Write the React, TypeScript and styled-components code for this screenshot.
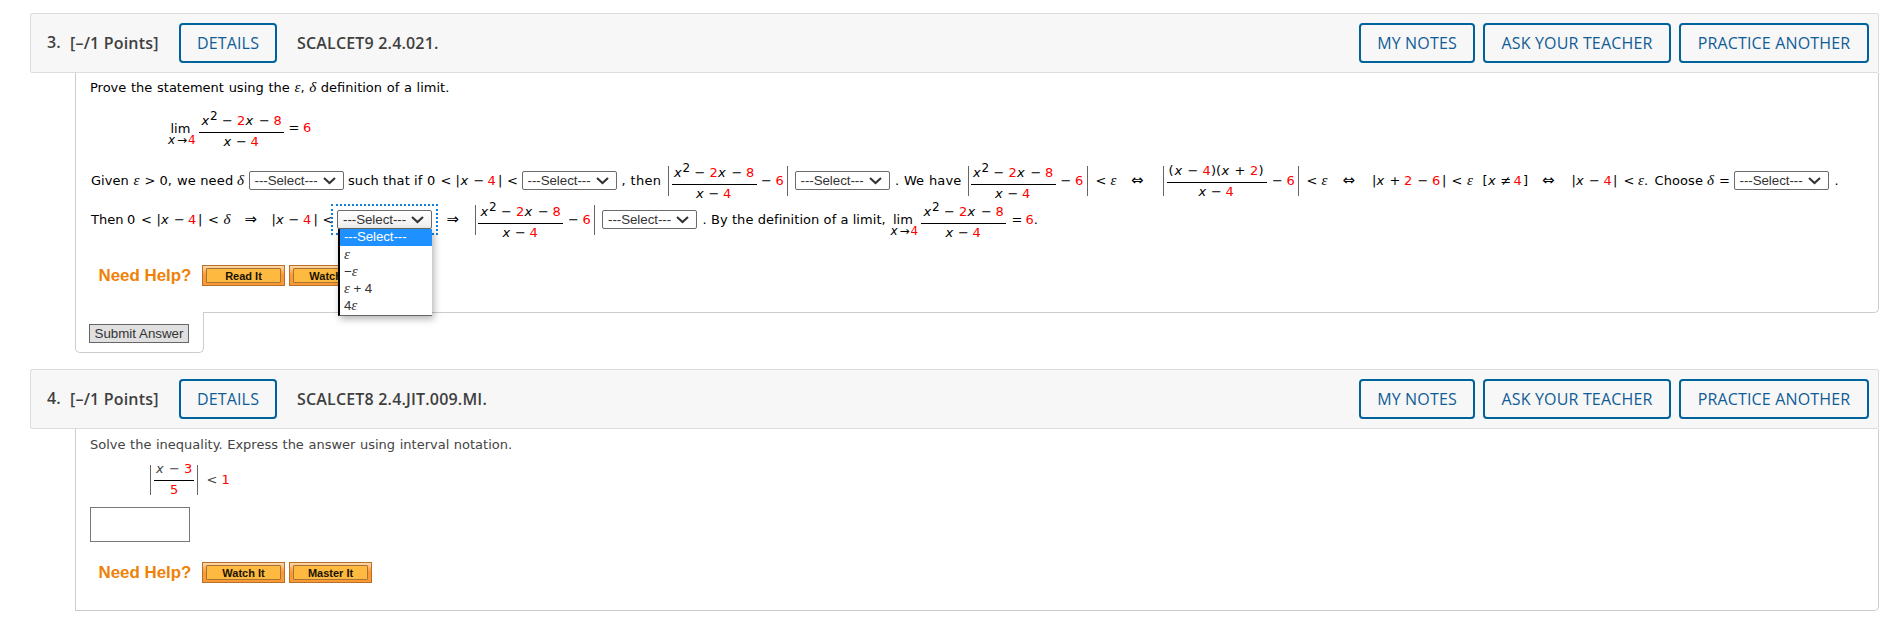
import React from 'react';
import styled, { createGlobalStyle, css } from 'styled-components';

const Global = createGlobalStyle`
  * { box-sizing: border-box; }
  body { margin: 0; background: #fff; font-family: 'DejaVu Sans', sans-serif; font-size: 13px; color: #000; }
`;

const Page = styled.main`
  width: 1891px;
  height: 643px;
  padding: 13px 12px 0 30px;
  overflow: hidden;
`;
const Question = styled.section`
  margin-bottom: 16px;
`;
const Header = styled.header`
  height: 60px;
  display: flex;
  align-items: center;
  padding: 0 9px 0 16px;
  background: #f7f7f7;
  border: 1px solid #ddd;
  border-radius: 2px;
  font: 600 16px/24px 'Open Sans', sans-serif;
  letter-spacing: 0.18px;
  color: #3f3f3f;
  white-space: nowrap;
`;
const Num = styled.span`
  width: 23px;
  padding-bottom: 2px;
`;
const Points = styled.span`
  width: 109px;
`;
const Code = styled.span`
  margin-left: 20px;
  flex: 1;
`;
const Actions = styled.div`
  display: flex;
  gap: 8px;
`;
const HeadButton = styled.button<{ $w: number }>`
  width: ${(p) => p.$w}px;
  height: 40px;
  padding: 0;
  border: 2px solid #00629b;
  border-radius: 4px;
  background: #f7f7f7;
  color: #0f5c96;
  font: 400 16px/24px 'Open Sans', sans-serif;
  letter-spacing: 0.16px;
  white-space: nowrap;
`;
const Body = styled.div<{ $h: number; $soft?: boolean }>`
  height: ${(p) => p.$h}px;
  margin-left: 45px;
  padding: ${(p) => (p.$soft ? 6 : 5)}px 0 0 14px;
  border: 1px solid #ccc;
  border-top: 0;
  border-radius: 0 0 5px 0;
  color: ${(p) => (p.$soft ? '#444' : '#000')};
`;
const Prompt = styled.p<{ $ws: number }>`
  margin: 0;
  line-height: 20px;
  word-spacing: ${(p) => p.$ws}px;
  white-space: nowrap;
`;
const Row = styled.div<{ $top?: number }>`
  display: flex;
  align-items: flex-start;
  height: 39px;
  margin-top: ${(p) => p.$top ?? 0}px;
  padding-left: 1px;
  line-height: 39px;
  white-space: pre;
`;
const Slot = styled.span<{ $w?: number; $ls?: number }>`
  display: block;
  flex: none;
  width: ${(p) => (p.$w === undefined ? 'auto' : `${p.$w}px`)};
  letter-spacing: ${(p) => p.$ls ?? 0}px;
`;
const Var = styled.i`
  font-style: italic;
`;
const Greek = styled.i`
  font: italic 15px 'Liberation Serif', serif;
`;
const Red = styled.span`
  color: #f00;
`;
const Arrow = styled.span`
  font-size: 15px;
`;
const Bar = styled.span`
  display: block;
  width: 1px;
  height: 30px;
  margin: 5px 0 0 -1px;
  background: #666;
`;
const Fraction = styled.span<{ $w: number; $top?: number }>`
  display: flex;
  flex-direction: column;
  width: ${(p) => p.$w}px;
  margin: ${(p) => p.$top ?? 4}px 0 0 -1px;
  line-height: 16px;
`;
const Upper = styled.span`
  display: flex;
  height: 20px;
  padding-left: 1px;
  border-bottom: 1px solid #000;
`;
const Lower = styled.span<{ $pad: number }>`
  display: flex;
  height: 17px;
  padding: 1px 0 0 ${(p) => p.$pad}px;
`;
const Power = styled.span`
  display: block;
  margin-top: -5px;
  font-size: 12px;
`;
const LimBox = styled.span<{ $top: number }>`
  display: block;
  padding-top: ${(p) => p.$top}px;
  line-height: 16px;
`;
const LimWord = styled.span`
  display: block;
  height: 11px;
  padding-left: 2.5px;
`;
const LimSub = styled.span`
  display: flex;
  font-size: 12px;
`;
const box = css`
  display: flex;
  align-items: center;
  width: 95px;
  height: 19px;
  border: 1px solid #6b6b6b;
  border-radius: 2px;
  background: #fff;
`;
const SelectBox = styled.span`
  ${box}
  justify-content: space-between;
  margin: 10px 0 0 -1px;
  padding: 0 7px 0 5px;
  font: 13.33px/17px 'Liberation Sans', sans-serif;
  letter-spacing: -0.05px;
  color: #333;
`;
const Focus = styled.span`
  display: block;
  position: relative;
  width: 107px;
  height: 31px;
  margin: 4px 0 0 -7px;
  padding: 4px;
  border: 2px dotted #1381dc;
  & > ${SelectBox} { margin: 0; background: linear-gradient(#fff, #eee); }
`;
const Menu = styled.span`
  position: absolute;
  z-index: 2;
  left: 5px;
  top: 23px;
  width: 94px;
  height: 87px;
  border-left: 2px solid #000;
  border-bottom: 1px solid #666;
  background: #fff;
  box-shadow: 2px 3px 7px rgba(0, 0, 0, 0.3);
`;
const Option = styled.span<{ $on?: boolean }>`
  display: block;
  height: 17px;
  padding-left: 4px;
  font: 13.33px/15px 'Liberation Sans', sans-serif;
  letter-spacing: -0.1px;
  color: ${(p) => (p.$on ? '#fff' : '#333')};
  background: ${(p) => (p.$on ? '#1e90ff' : 'transparent')};
`;
const Help = styled.div<{ $top: number }>`
  display: flex;
  align-items: center;
  height: 21px;
  margin-top: ${(p) => p.$top}px;
  padding-left: 8.5px;
`;
const HelpLabel = styled.span`
  width: 103.5px;
  font: 700 16.9px/20px 'Liberation Sans', sans-serif;
  color: #ee8208;
`;
const HelpButton = styled.button`
  width: 83px;
  height: 21px;
  margin-right: 4px;
  padding: 2px 3px;
  border: 1px solid #b5702a;
  background: linear-gradient(#ffd9ad, #fb9a35 45%, #fb9a35);
`;
const HelpFace = styled.span`
  display: block;
  height: 15px;
  border: 1px solid #a87436;
  border-radius: 1px;
  background: #fdb940;
  color: #1b1200;
  font: 700 11px/14px 'Liberation Sans', sans-serif;
`;
const Tab = styled.div`
  position: relative;
  width: 129px;
  height: 41px;
  margin: -1px 0 0 45px;
  padding: 12px 0 0 13px;
  border: 1px solid #ccc;
  border-top: 0;
  border-radius: 0 0 5px 5px;
  background: #fff;
`;
const Submit = styled.button`
  display: block;
  width: 100px;
  height: 19px;
  padding: 0;
  border: 1px solid #666;
  background: #e0e0e0;
  color: #333;
  font: 13.33px/17px 'Liberation Sans', sans-serif;
`;
const Answer = styled.input`
  display: block;
  width: 100px;
  height: 35px;
  margin-top: 8px;
  border: 1px solid #777;
  background: #fff;
`;

const Select = () => (
  <SelectBox>
    ---Select---
    <svg width="13" height="8" viewBox="0 0 13 8" fill="none" stroke="#333" strokeWidth="2.1">
      <path d="M1 1l5.5 5L12 1" />
    </svg>
  </SelectBox>
);

type Part = [number, React.ReactNode, number?];

/* Lays parts out left to right; each number is the distance of the part from the line's start. */
const Parts = ({ items }: { items: Part[] }) => (
  <>
    {items.map(([x, node, ls], i) => (
      <Slot key={i} $w={i + 1 < items.length ? items[i + 1][0] - x : undefined} $ls={ls}>
        {node}
      </Slot>
    ))}
  </>
);

const x = <Var>x</Var>;
const eps = <Greek>ε</Greek>;
const del = <Greek>δ</Greek>;
const iff = <Arrow>⇔</Arrow>;
const implies = <Arrow>⇒</Arrow>;
const r = (t: string) => <Red>{t}</Red>;

const Quadratic = ({ top }: { top?: number }) => (
  <Fraction $w={85} $top={top}>
    <Upper>
      <Parts items={[[0, ''], [1.5, x], [10, <Power>2</Power>], [22, '−'], [37, r('2')], [45.5, x], [59, '−'], [73.5, r('8')]]} />
    </Upper>
    <Lower $pad={24.5}>
      <Parts items={[[0, x], [12.5, '−'], [27, r('4')]]} />
    </Lower>
  </Fraction>
);

const Product = () => (
  <Fraction $w={100} $top={2}>
    <Upper>
      <Parts items={[[0, ''], [1, '('], [7, x], [20, '−'], [35, r('4')], [43.5, ')('], [54, x], [67, '+'], [82.5, r('2')], [91, ')']]} />
    </Upper>
    <Lower $pad={32}>
      <Parts items={[[0, x], [12.5, '−'], [27, r('4')]]} />
    </Lower>
  </Fraction>
);

const Limit = ({ top = 12 }: { top?: number }) => (
  <LimBox $top={top}>
    <LimWord>lim</LimWord>
    <LimSub>
      <Parts items={[[0, x], [9, '→'], [20, r('4')]]} />
    </LimSub>
  </LimBox>
);

const rowOne: Part[] = [
  [-0.5, 'Given'], [42, eps], [53, '>'], [68, '0,'], [85.5, 'we need', 0.15], [145.5, del],
  [158, <Select />], [256.5, 'such that if', 0.1], [335.5, '0'], [349, '<'], [364, '|'],
  [369, x], [382, '−'], [396, r('4')], [406.5, '|'], [415.5, '<'], [431, <Select />],
  [530, ','], [539, 'then', 0.3], [577, <Bar />], [581, <Quadratic />], [669.5, '−'],
  [684, r('6')], [696, <Bar />], [704, <Select />], [803.5, '.'], [812.5, 'We'],
  [837.5, 'have', 0.1], [877, <Bar />], [880, <Quadratic />], [969, '−'], [983.5, r('6')],
  [996, <Bar />], [1004, '<'], [1019, eps], [1039.5, iff], [1072, <Bar />],
  [1076, <Product />], [1180.5, '−'], [1195, r('6')], [1207, <Bar />], [1215, '<'],
  [1230, eps], [1251, iff], [1280.5, '|'], [1285, x], [1298, '+'], [1312.5, r('2')],
  [1326, '−'], [1340.5, r('6')], [1350.5, '|'], [1360, '<'], [1375.5, eps], [1391, '['],
  [1396.5, x], [1409, '≠'], [1422, r('4')], [1431.5, ']'], [1450.5, iff], [1480, '|'],
  [1484.5, x], [1497.5, '−'], [1512, r('4')], [1521.5, '|'], [1532, '<'], [1546.5, <>{eps}.</>],
  [1563, 'Choose', 0.1], [1615.5, del], [1627.5, '='], [1643, <Select />], [1743, '.'],
];

const rowTwo: Part[] = [
  [0, 'Then'], [36, '0'], [50, '<'], [65.5, '|'], [70, x], [83, '−'], [97, r('4')],
  [107, '|'], [117, '<'], [132.5, del], [153.5, implies], [180.5, '|'], [185, x],
  [197.5, '−'], [212, r('4')], [222.5, '|'], [231.5, '<'],
  [247, (
    <Focus>
      <Select />
      <Menu>
        <Option $on>---Select---</Option>
        <Option>{eps}</Option>
        <Option>−{eps}</Option>
        <Option>{eps} + 4</Option>
        <Option>4{eps}</Option>
      </Menu>
    </Focus>
  )],
  [355.5, implies], [385, <Bar />], [388, <Quadratic />], [477, '−'], [491.5, r('6')],
  [504, <Bar />], [512, <Select />], [611.5, '.'], [620, 'By the definition of a limit,', 0.06],
  [799.5, <Limit />], [831, <Quadratic />], [920.5, '='], [934.5, <>{r('6')}.</>],
];

const Head = ({ n, code }: { n: string; code: string }) => (
  <Header>
    <Num>{n}</Num>
    <Points>[–/1 Points]</Points>
    <HeadButton $w={98}>DETAILS</HeadButton>
    <Code>{code}</Code>
    <Actions>
      <HeadButton $w={116}>MY NOTES</HeadButton>
      <HeadButton $w={188}>ASK YOUR TEACHER</HeadButton>
      <HeadButton $w={190}>PRACTICE ANOTHER</HeadButton>
    </Actions>
  </Header>
);

const NeedHelp = ({ top, labels }: { top: number; labels: string[] }) => (
  <Help $top={top}>
    <HelpLabel>Need Help?</HelpLabel>
    {labels.map((l) => (
      <HelpButton key={l}><HelpFace>{l}</HelpFace></HelpButton>
    ))}
  </Help>
);

export default function App() {
  return (
    <Page>
      <Global />
      <Question>
        <Head n="3." code="SCALCET9 2.4.021." />
        <Body $h={240}>
          <Prompt $ws={0.55}>Prove the statement using the {eps}, {del} definition of a limit.</Prompt>
          <Row $top={10}>
            <Parts items={[[0, ''], [77, <Limit top={13} />], [109, <Quadratic top={5} />], [197.5, '='], [212, r('6')]]} />
          </Row>
          <Row $top={14}><Parts items={rowOne} /></Row>
          <Row><Parts items={rowTwo} /></Row>
          <NeedHelp top={26} labels={['Read It', 'Watch It']} />
        </Body>
        <Tab><Submit>Submit Answer</Submit></Tab>
      </Question>
      <Question>
        <Head n="4." code="SCALCET8 2.4.JIT.009.MI." />
        <Body $h={182} $soft>
          <Prompt $ws={0.45}>Solve the inequality. Express the answer using interval notation.</Prompt>
          <Row $top={5}>
            <Parts
              items={[
                [0, ''],
                [60, <Bar />],
                [64, (
                  <Fraction $w={40} $top={1}>
                    <Upper><Parts items={[[0, ''], [1, x], [14, '−'], [29, r('3')]]} /></Upper>
                    <Lower $pad={16}>{r('5')}</Lower>
                  </Fraction>
                )],
                [107, <Bar />],
                [115.5, '<'],
                [130.5, r('1')],
              ]}
            />
          </Row>
          <Answer as="input" readOnly />
          <NeedHelp top={20} labels={['Watch It', 'Master It']} />
        </Body>
      </Question>
    </Page>
  );
}
